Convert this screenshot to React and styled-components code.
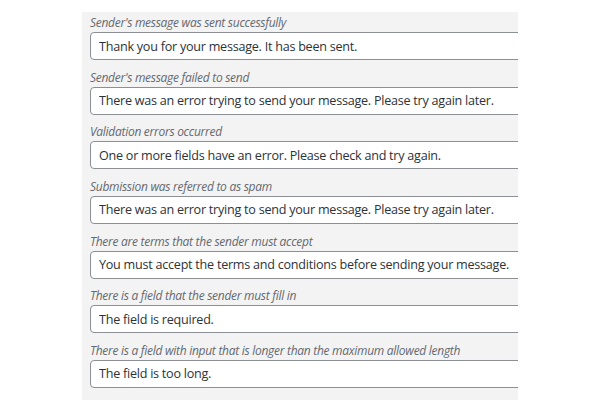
import styled, { createGlobalStyle } from "styled-components";

const GlobalStyle = createGlobalStyle`
  html, body {
    margin: 0;
    padding: 0;
    background: #ffffff;
  }
  body {
    font-family: "Open Sans", "Noto Sans", sans-serif;
  }
`;

const Page = styled.div`
  height: 400px;
  overflow: hidden;
  padding: 12px 0 0 82px;
  box-sizing: border-box;
`;

const Panel = styled.section`
  width: 436px;
  height: 400px;
  background: #f3f3f3;
  overflow: hidden;
  padding: 2px 0 0 8px;
  box-sizing: border-box;
  display: flex;
  flex-direction: column;
  gap: 8.67px;
`;

const Field = styled.div`
  display: flex;
  flex-direction: column;
`;

const Label = styled.label`
  font-size: 12px;
  letter-spacing: -0.28px;
  font-style: italic;
  line-height: 18px;
  height: 18px;
  color: #646970;
  white-space: nowrap;
`;

const Input = styled.input`
  width: 520px;
  height: 28px;
  box-sizing: border-box;
  border: 1px solid #8c8f94;
  border-radius: 4px;
  background: #ffffff;
  padding: 0 8px;
  font-family: inherit;
  font-size: 12.6px;
  letter-spacing: -0.25px;
  color: #2c3338;
  outline: none;
`;

const messages = [
  ["Sender's message was sent successfully", "Thank you for your message. It has been sent."],
  ["Sender's message failed to send", "There was an error trying to send your message. Please try again later."],
  ["Validation errors occurred", "One or more fields have an error. Please check and try again."],
  ["Submission was referred to as spam", "There was an error trying to send your message. Please try again later."],
  ["There are terms that the sender must accept", "You must accept the terms and conditions before sending your message."],
  ["There is a field that the sender must fill in", "The field is required."],
  ["There is a field with input that is longer than the maximum allowed length", "The field is too long."],
];

export default function App() {
  return (
    <>
      <GlobalStyle />
      <Page>
        <Panel>
          {messages.map(([label, value], i) => (
            <Field key={i}>
              <Label>{label}</Label>
              <Input type="text" defaultValue={value} readOnly />
            </Field>
          ))}
        </Panel>
      </Page>
    </>
  );
}
